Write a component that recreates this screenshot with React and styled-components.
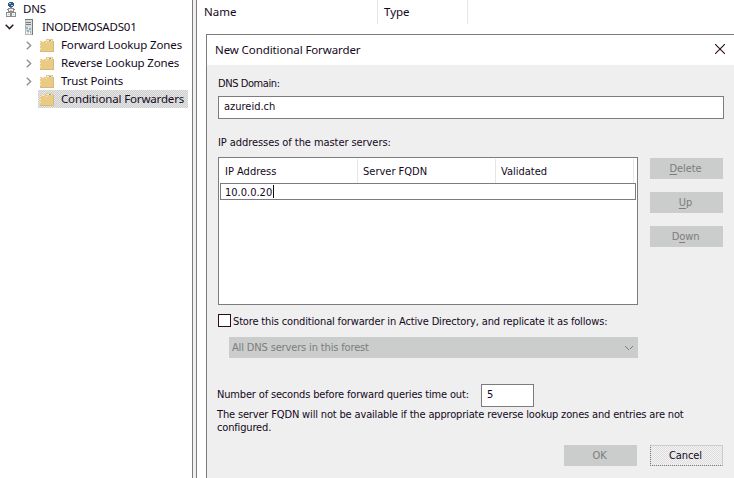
import React from 'react';
import styled, { createGlobalStyle } from 'styled-components';

const Global = createGlobalStyle`
  * { box-sizing: border-box; }
  body { margin: 0; background: #fff; overflow: hidden; }
  button, input { font: inherit; color: inherit; border-radius: 0; }
`;

const Window = styled.div`
  display: flex;
  width: 734px;
  height: 478px;
  overflow: hidden;
  background: #fff;
  color: #14081c;
  font: 11.5px/18px "Noto Sans", sans-serif;
  white-space: nowrap;
`;

const TreePane = styled.nav`
  flex: 0 0 193px;
  border-right: 1px solid #7d7b7d;
`;

const Splitter = styled.div`
  flex: 0 0 4px;
  background: #efefef;
  border-right: 1px solid #7d7b7d;
`;

const TreeRow = styled.div`
  display: flex;
  align-items: center;
  height: 18px;
  padding-left: ${(p) => p.$indent}px;
`;

const Toggle = styled.span`
  display: flex;
  flex: 0 0 ${(p) => p.$width}px;
  svg { display: block; }
`;

const NodeIcon = styled.span`
  display: flex;
  justify-content: center;
  flex: 0 0 ${(p) => p.$width || 16}px;
`;

const dither = (a, b) => `repeating-conic-gradient(${a} 0 25%, ${b} 0 50%) 0 0 / 2px 2px`;

const NodeBody = styled.span`
  display: flex;
  align-items: center;
  height: 18px;
  padding: 0 4px 0 1px;
  background: ${(p) => (p.$selected ? dither('#cbcdcc', '#e8e8e8') : 'none')};
`;

const NodeLabel = styled.span`
  padding-left: ${(p) => p.$gap ?? 7}px;
  letter-spacing: ${(p) => p.$track || 0}px;
  line-height: 18px;
  height: 18px;
`;

const ContentPane = styled.main`
  flex: 1;
  min-width: 0;
  display: flex;
  flex-direction: column;
`;

const ListHeader = styled.div`
  display: flex;
  flex: 0 0 24px;
  margin-bottom: 10px;
`;

const HeaderCell = styled.div`
  width: ${(p) => p.$width}px;
  padding-left: ${(p) => p.$pad}px;
  border-right: 1px solid #e6e6e6;
  line-height: 24px;
`;

const Dialog = styled.section`
  flex: 1;
  display: flex;
  flex-direction: column;
  margin-left: 9px;
  border: solid #7d7b7d;
  border-width: 1px 0 0 1px;
  background: #efefef;
`;

const TitleBar = styled.header`
  display: flex;
  align-items: center;
  justify-content: space-between;
  height: 30px;
  padding: 0 9px 0 8px;
  background: #fff;
  letter-spacing: -0.1px;
`;

const CloseButton = styled.button`
  display: flex;
  padding: 0 0 2px;
  border: 0;
  background: none;
`;

const DialogBody = styled.div`
  display: flex;
  flex-direction: column;
  padding: 12px 11px 0 11px;
  font: 11px/14px "DejaVu Sans Condensed", "DejaVu Sans", sans-serif;
  font-stretch: condensed;
`;

const Label = styled.div`
  height: 14px;
  letter-spacing: ${(p) => p.$track || 0}px;
`;

const Field = styled.input`
  width: ${(p) => p.$width}px;
  height: 23px;
  padding: 0 4px 3px 5px;
  border: 1px solid #7d7b7d;
  background: #fff;
  outline: 0;
`;

const DomainField = styled(Field)`
  margin: 5px 0 17px;
`;

const ServerArea = styled.div`
  display: flex;
  gap: 12px;
  margin-top: 7px;
`;

const ServerList = styled.div`
  width: 420px;
  height: 148px;
  padding: 1px;
  border: 1px solid #7d7b7d;
  background: #fff;
`;

const Columns = styled.div`
  display: flex;
  height: 24px;
`;

const Column = styled.div`
  width: ${(p) => p.$width}px;
  padding-left: 5px;
  border-right: 1px solid #e6e6e6;
  line-height: 25px;
`;

const EditRow = styled.div`
  display: flex;
  align-items: flex-start;
  width: 416px;
  height: 17px;
  padding: 1px 0 0 4px;
  border: 1px solid #7d7b7d;
  line-height: 15px;
`;

const Caret = styled.span`
  width: 1px;
  height: 13px;
  margin-left: 1px;
  background: #14081c;
`;

const SideButtons = styled.div`
  display: flex;
  flex-direction: column;
  gap: 13px;
  padding-top: 1px;
`;

const PushButton = styled.button`
  width: 73px;
  height: 21px;
  padding: 1px 2px 0 0;
  border: 0;
  background: #cbcdcc;
  color: #7d7b7d;
  line-height: 20px;
  letter-spacing: -0.1px;
  u { text-underline-offset: 2px; text-decoration-thickness: 1px; }
`;

const FocusButton = styled(PushButton)`
  border: 1px solid #cbcdcc;
  border-left: 1px dotted #7d7b7d;
  border-bottom: 1px dotted #7d7b7d;
  background: ${dither('#dcdddc', '#f4f4f4')};
  color: #14081c;
  line-height: 18px;
`;

const CheckRow = styled.label`
  display: flex;
  gap: 2px;
  height: 13px;
  margin-top: 9px;
  line-height: 15px;
  letter-spacing: -0.155px;
`;

const CheckBox = styled.span`
  width: 13px;
  height: 13px;
  border: 1px solid #2d0a24;
  background: #fff;
`;

const Combo = styled.div`
  display: flex;
  align-items: center;
  justify-content: space-between;
  width: 409px;
  height: 21px;
  margin: 10px 0 26px 11px;
  padding: 0 5px 0 3px;
  background: #cbcdcc;
  color: #7d7b7d;
  line-height: 23px;
  letter-spacing: -0.15px;
`;

const TimeoutRow = styled.div`
  display: flex;
  height: 23px;
  line-height: 21px;
  letter-spacing: -0.165px;
`;

const TimeoutLabel = styled.span`
  width: 264px;
  margin-left: -1px;
`;

const Note = styled.p`
  width: 490px;
  margin: 1px 0 0 -1px;
  line-height: 13px;
  letter-spacing: -0.16px;
  white-space: normal;
`;

const Footer = styled.footer`
  display: flex;
  gap: 13px;
  margin: 11px 0 0 346px;
`;

const DnsIcon = () => (
  <svg width="10" height="16" viewBox="0 0 10 16" shapeRendering="crispEdges">
    <path d="M3 1h4v1h1v3H7v1H3V5H2V2h1z" fill="#2e568f" />
    <path d="M3 2h2v1H3zM5 4h2v1H5z" fill="#9ed0ee" />
    <path d="M4 6h2v2H4zM1 8h8v1H1z" fill="#7d7b7d" />
    <path d="M2.5 7.5h5v3h-5zM.5 11.5h4v4h-4zM5.5 11.5h4v4h-4z" fill="#f2f2f2" stroke="#8b8d8e" />
    <path d="M4 9h2v1H4zM2 13h1v1H2zM7 13h1v1H7z" fill="#bfc2c4" />
  </svg>
);

const ServerIcon = () => (
  <svg width="8" height="16" viewBox="0 0 8 16" shapeRendering="crispEdges">
    <path d="M0 0h8v16H0z" fill="#d9dbdc" />
    <path d="M7 0h1v16H7zM1 3h5v1H1zM1 5h5v1H1zM0 0h8v1H0z" fill="#77797b" />
    <path d="M0 1h1v15H0zM0 15h7v1H0z" fill="#b4b6b8" />
    <path d="M1 8h2v2H1zM4 9h2v2H4zM2 11h2v2H2zM5 12h1v2H5z" fill="#8fb4c6" />
    <path d="M3 8h1v1H3zM1 13h1v2H1zM4 13h1v2H4z" fill="#fff" />
  </svg>
);

const FolderIcon = () => (
  <svg width="14" height="13" viewBox="0 0 14 13" shapeRendering="crispEdges">
    <path d="M0 2h6V0h7v2h1v11H0z" fill="#e9cb85" />
    <path d="M13 2h1v11h-1zM0 12h14v1H0z" fill="#d9b97a" />
    <path d="M7 1h5v1H7z" fill="#fff3cc" />
    <path d="M9 1h2v1H9z" fill="#7baac4" />
    <path d="M0 3h1v1H0zM0 6h1v1H0zM0 9h1v1H0zM2 2h2v1H2zM6 3h1v1H6z" fill="#fff0c2" />
  </svg>
);

const Expanded = () => (
  <svg width="9" height="6" viewBox="0 0 9 6">
    <path d="M.7 .8l3.8 3.8L8.3 .8" fill="none" stroke="#2d1a2b" strokeWidth="1.5" />
  </svg>
);

const Collapsed = () => (
  <svg width="6" height="9" viewBox="0 0 6 9">
    <path d="M.8 .7l3.9 3.8L.8 8.3" fill="none" stroke="#8d8b8d" strokeWidth="1.3" />
  </svg>
);

const CloseIcon = () => (
  <svg width="10" height="10" viewBox="0 0 10 10">
    <path d="M0 0l10 10M10 0L0 10" stroke="#2d0a24" strokeWidth="1.1" />
  </svg>
);

const ComboArrow = () => (
  <svg width="8" height="4" viewBox="0 0 8 4" shapeRendering="crispEdges">
    <path d="M0 0h1v1H0zM1 1h1v1H1zM2 2h1v1H2zM3 3h1v1H3zM5 2h1v1H5zM6 1h1v1H6zM7 0h1v1H7z" fill="#7d7b7d" />
  </svg>
);

const folders = [
  { name: 'Forward Lookup Zones', track: -0.13, expandable: true },
  { name: 'Reverse Lookup Zones', track: -0.16, expandable: true },
  { name: 'Trust Points', track: -0.15, expandable: true },
  { name: 'Conditional Forwarders', track: -0.15, selected: true },
];

export default function App() {
  return (
    <Window>
      <Global />
      <TreePane>
        <TreeRow $indent={5}>
          <NodeIcon $width={12}><DnsIcon /></NodeIcon>
          <NodeLabel $gap={6} $track={-0.2}>DNS</NodeLabel>
        </TreeRow>
        <TreeRow $indent={5}>
          <Toggle $width={14}><Expanded /></Toggle>
          <NodeIcon $width={20}><ServerIcon /></NodeIcon>
          <NodeLabel $gap={3} $track={-0.22}>INODEMOSADS01</NodeLabel>
        </TreeRow>
        {folders.map((f) => (
          <TreeRow key={f.name} $indent={26}>
            <Toggle $width={12}>{f.expandable && <Collapsed />}</Toggle>
            <NodeBody $selected={f.selected}>
              <NodeIcon><FolderIcon /></NodeIcon>
              <NodeLabel $gap={6} $track={f.track}>{f.name}</NodeLabel>
            </NodeBody>
          </TreeRow>
        ))}
      </TreePane>
      <Splitter />
      <ContentPane>
        <ListHeader>
          <HeaderCell $width={181} $pad={7}>Name</HeaderCell>
          <HeaderCell $width={90} $pad={6}>Type</HeaderCell>
        </ListHeader>
        <Dialog>
          <TitleBar>
            New Conditional Forwarder
            <CloseButton aria-label="Close"><CloseIcon /></CloseButton>
          </TitleBar>
          <DialogBody>
            <Label $track={-0.42}>DNS Domain:</Label>
            <DomainField $width={506} defaultValue="azureid.ch" />
            <Label $track={-0.07}>IP addresses of the master servers:</Label>
            <ServerArea>
              <ServerList>
                <Columns>
                  <Column $width={138}>IP Address</Column>
                  <Column $width={138}>Server FQDN</Column>
                  <Column $width={138}>Validated</Column>
                </Columns>
                <EditRow>10.0.0.20<Caret /></EditRow>
              </ServerList>
              <SideButtons>
                <PushButton><u>D</u>elete</PushButton>
                <PushButton><u>U</u>p</PushButton>
                <PushButton>D<u>o</u>wn</PushButton>
              </SideButtons>
            </ServerArea>
            <CheckRow>
              <CheckBox />
              Store this conditional forwarder in Active Directory, and replicate it as follows:
            </CheckRow>
            <Combo>All DNS servers in this forest<ComboArrow /></Combo>
            <TimeoutRow>
              <TimeoutLabel>Number of seconds before forward queries time out:</TimeoutLabel>
              <Field $width={53} defaultValue="5" />
            </TimeoutRow>
            <Note>
              The server FQDN will not be available if the appropriate reverse lookup zones and entries are not
              configured.
            </Note>
            <Footer>
              <PushButton>OK</PushButton>
              <FocusButton>Cancel</FocusButton>
            </Footer>
          </DialogBody>
        </Dialog>
      </ContentPane>
    </Window>
  );
}
